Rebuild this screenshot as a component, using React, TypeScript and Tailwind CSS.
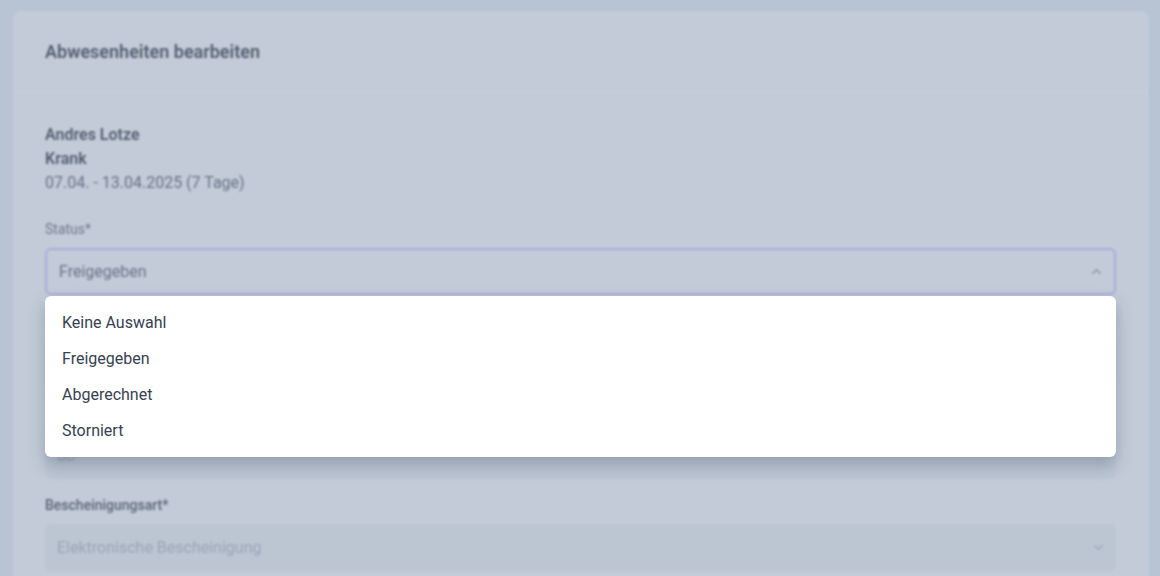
import { ChevronDown, ChevronUp } from "lucide-react";

const options = ["Keine Auswahl", "Freigegeben", "Abgerechnet", "Storniert"];

const App = () => {
    return (
        <div className="relative h-[576px] w-full overflow-hidden bg-[#b8c4d4] font-['Roboto',sans-serif]">
            <div className="blur-[1px] pl-[13px] pr-[11px] pt-[11px]">
                <div className="rounded-lg bg-[#c2cbd7]">
                    <div className="flex h-[81px] items-center border-b border-[#c7d0db] px-8 pt-px">
                        <h2 className="text-[18px] font-semibold text-[#535e70]">Abwesenheiten bearbeiten</h2>
                    </div>

                    <div className="pl-8 pr-[33px] pt-[31px] pb-6">
                        <div className="text-[16px] leading-6">
                            <p className="font-semibold text-[#535e70]">Andres Lotze</p>
                            <p className="font-semibold text-[#535e70]">Krank</p>
                            <p className="text-[#687284]">07.04. - 13.04.2025 (7 Tage)</p>
                        </div>

                        <div className="mt-6">
                            <label className="block text-[14px] leading-5 text-[#6f798a]">Status*</label>
                            <div className="mt-[9px] flex h-[47px] items-center justify-between rounded-md border-2 border-[#a8acdf] pl-3 pr-[10px]">
                                <span className="text-[16px] text-[#687284]">Freigegeben</span>
                                <ChevronUp size={15} className="text-[#7d8797]" />
                            </div>
                        </div>

                        {/* fields hidden under the open list */}
                        <div className="mt-4">
                            <div className="h-5" />
                            <div className="mt-[9px] h-[47px] rounded-md border border-[#b3bdcb]" />
                        </div>

                        <div className="mt-4">
                            <div className="h-5" />
                            <div className="mt-[9px] flex h-[47px] items-center rounded-md bg-[#bcc6d3] px-3">
                                <span className="text-[16px] text-[#9aa4b3]">Sb</span>
                            </div>
                        </div>

                        <div className="mt-4">
                            <label className="block text-[14px] font-medium leading-5 text-[#5a6577]">Bescheinigungsart*</label>
                            <div className="mt-[9px] flex h-[47px] items-center justify-between rounded-md bg-[#bcc6d3] pl-3 pr-[10px]">
                                <span className="text-[16px] text-[#9aa4b3]">Elektronische Bescheinigung</span>
                                <ChevronDown size={15} className="text-[#98a2b2]" />
                            </div>
                        </div>
                    </div>
                </div>
            </div>

            <ul className="absolute left-[45px] top-[296px] w-[1071px] rounded-md bg-white pt-[9px] pb-2 shadow-[0_8px_16px_rgba(70,85,110,0.35)]">
                {options.map((o) => (
                    <li key={o} className="flex h-9 items-center pl-[17px] text-[16px] text-[#374151]">
                        {o}
                    </li>
                ))}
            </ul>
        </div>
    );
};

export default App;
